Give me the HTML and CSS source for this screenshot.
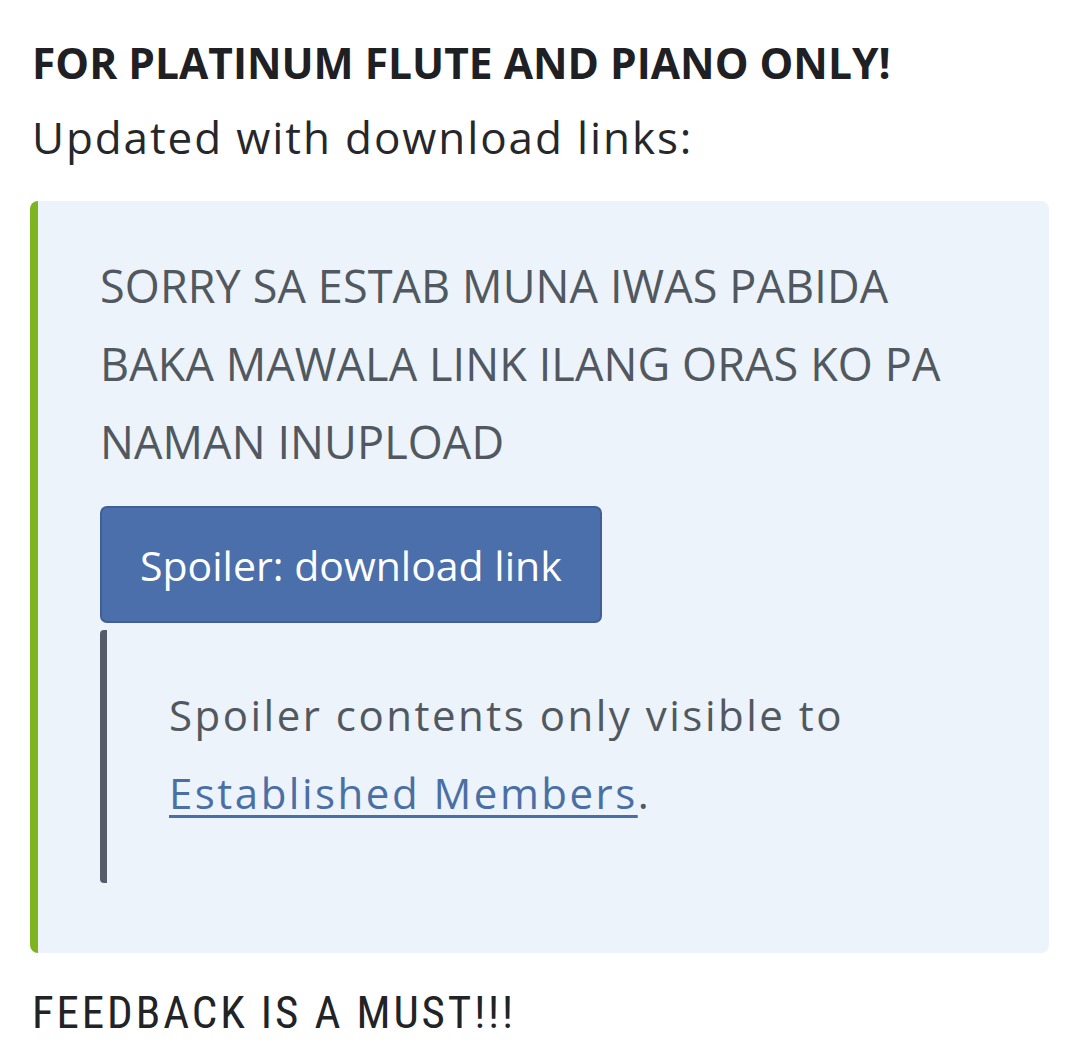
FILE: index.html
```html
<!DOCTYPE html>
<html lang="en">
<head>
    <meta charset="UTF-8">
    <meta name="viewport" content="width=device-width, initial-scale=1.0">
    <title>FOR PLATINUM FLUTE AND PIANO ONLY!</title>
    <link rel="stylesheet" href="styles.css">
</head>
<body>
    <div class="post">
        <p class="headline">FOR PLATINUM FLUTE AND PIANO ONLY!</p>
        <p class="intro">Updated with download links:</p>

        <div class="quote">
            <p class="quote-text">SORRY SA ESTAB MUNA IWAS PABIDA BAKA MAWALA LINK ILANG ORAS KO PA NAMAN INUPLOAD</p>

            <div class="spoiler">
                <button class="spoiler-button">Spoiler: download link</button>
                <div class="spoiler-body">
                    <p>Spoiler contents only visible to <a href="#">Established Members</a>.</p>
                </div>
            </div>
        </div>

        <p class="footer-note">FEEDBACK IS A MUST!!!</p>
    </div>
</body>
</html>
```

FILE: styles.css
```css
body {
    margin: 0;
    background-color: #ffffff;
    font-family: "Open Sans", Arial, sans-serif;
    color: #222326;
}
.post {
    padding: 35px 31px 0 32px;
}
p {
    margin: 0;
}
.headline {
    font-size: 42.5px;
    font-weight: 700;
    line-height: 56px;
    color: #1f2023;
}
.intro {
    font-size: 44px;
    letter-spacing: 1.9px;
    line-height: 56px;
    margin-top: 18px;
    color: #26272a;
}
.quote {
    margin-top: 36px;
    margin-left: -2px;
    background-color: #ecf3fa;
    border-left: 8px solid #7db41f;
    border-radius: 8px;
    padding: 46px 40px 70px 62px;
}
.quote-text {
    font-size: 45px;
    letter-spacing: 0.1px;
    line-height: 78px;
    color: #51585f;
    max-width: 850px;
}
.spoiler {
    margin-top: 25px;
}
.spoiler-button {
    display: block;
    font-family: "Open Sans", Arial, sans-serif;
    font-size: 41px;
    color: #ffffff;
    background-color: #4a6fab;
    border: 2px solid #3f5f95;
    border-radius: 7px;
    padding: 0 38px;
    height: 117px;
    cursor: pointer;
}
.spoiler-body {
    margin-top: 7px;
    border-left: 7px solid #555d6b;
    border-radius: 4px;
    padding: 46px 0 51px 62px;
}
.spoiler-body p {
    font-size: 42px;
    letter-spacing: 2.5px;
    line-height: 78px;
    color: #51585f;
    max-width: 720px;
}
.spoiler-body a {
    color: #4a6fa5;
    text-decoration: underline;
    text-decoration-thickness: 3px;
    text-underline-offset: 6px;
}
.footer-note {
    margin-top: 32px;
    font-family: "Liberation Sans Narrow", "Roboto Condensed", Roboto, sans-serif;
    font-stretch: condensed;
    font-size: 45px;
    letter-spacing: 2.9px;
    line-height: 56px;
    color: #222326;
}
```
